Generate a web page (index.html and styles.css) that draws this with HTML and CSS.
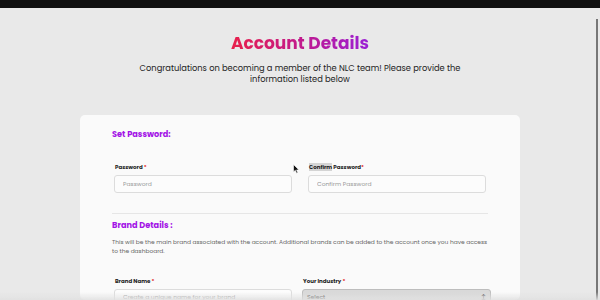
FILE: index.html
```html
<!DOCTYPE html>
<html lang="en">
<head>
<meta charset="utf-8">
<title>Account Details</title>
<link rel="stylesheet" href="styles.css">
</head>
<body>
<div class="topbar"></div>
<main class="page">
  <header class="intro">
    <h1 class="title">Account Details</h1>
    <p class="lead">Congratulations on becoming a member of the NLC team! Please provide the<br>information listed below</p>
  </header>
  <section class="card">
    <h2 class="section-title">Set Password:</h2>
    <div class="row row-pw">
      <div class="field">
        <label class="label">Password <span class="req">*</span></label>
        <input class="input" type="password" placeholder="Password">
      </div>
      <div class="field">
        <label class="label"><span class="sel">Confirm</span> Password<span class="req">*</span></label>
        <input class="input" type="password" placeholder="Confirm Password">
      </div>
    </div>
    <hr class="divider">
    <h2 class="section-title section-brand">Brand Details :</h2>
    <p class="note">This will be the main brand associated with the account. Additional brands can be added to the account once you have access to the dashboard.</p>
    <div class="row row-brand">
      <div class="field">
        <label class="label">Brand Name <span class="req">*</span></label>
        <input class="input" type="text" placeholder="Create a unique name for your brand">
      </div>
      <div class="field field-wide">
        <label class="label">Your Industry <span class="req">*</span></label>
        <div class="select">Select<span class="caret">&#8597;</span></div>
      </div>
    </div>
  </section>
</main>
<svg class="cursor" width="7" height="10" viewBox="0 0 7 10"><path d="M0.5 0.5 L0.5 8 L2.3 6.3 L3.6 9.3 L4.8 8.8 L3.6 5.9 L6 5.9 Z" fill="#111" stroke="#fff" stroke-width="0.6"/></svg>
<div class="scrollbar"></div>
<div class="bottom-fade"></div>
</body>
</html>
```
FILE: styles.css
```css
* { box-sizing: border-box; }
html, body { margin: 0; padding: 0; }
body {
  background: #e9e9e9;
  font-family: "Poppins", "Inter", "Noto Sans", sans-serif;
  color: #222;
  width: 600px;
  height: 300px;
  overflow: hidden;
}
.topbar { height: 8px; background: #111; }
.page { padding-top: 24px; }
.intro { text-align: center; }
.title {
  margin: 0;
  font-size: 17px;
  font-weight: 700;
  line-height: 22px;
  background: linear-gradient(90deg, #e8204a 0%, #c21a8c 50%, #9a1fd6 100%);
  -webkit-background-clip: text;
  background-clip: text;
  color: transparent;
  display: inline-block;
  vertical-align: top;
}
.lead {
  margin: 6px 0 0;
  font-size: 8.3px;
  line-height: 11px;
  color: #222;
}
.card {
  margin: 30px 80px 0;
  background: #fafafa;
  border-radius: 5px;
  padding: 13px 32px 0;
  height: 185px;
  overflow: hidden;
}
.section-title {
  margin: 0;
  font-size: 8.2px;
  font-weight: 700;
  color: #a313e6;
  line-height: 12px;
}
.section-brand { margin-top: 5px; }
.row { display: flex; gap: 16px; padding-left: 2px; }
.row-pw { margin-top: 23px; }
.field { width: 178px; flex-shrink: 0; display: flex; flex-direction: column; }
.field-wide { width: 189px; margin-left: -6px; }
.label {
  font-size: 5.5px;
  font-weight: 700;
  color: #222;
  line-height: 8px;
  margin-left: 1px;
}
.sel { background: #d4d4d4; }
.req { color: #e02020; }
.input {
  margin-top: 4px;
  height: 18px;
  border: 1px solid #dcdcdc;
  border-radius: 3px;
  background: #fcfcfc;
  font-family: inherit;
  font-size: 6px;
  padding: 0 8px;
  color: #333;
  outline: none;
}
.input::placeholder { color: #9a9a9a; }
.divider {
  margin: 19.5px 0 0;
  border: 0;
  height: 1.5px;
  background: #e6e6e6;
}
.note {
  margin: 7px 0 0;
  font-size: 5.9px;
  line-height: 9px;
  color: #666;
}
.row-brand { margin-top: 20.5px; }
.select {
  margin-top: 4px;
  height: 18px;
  border: 1px solid #bdbdbd;
  border-radius: 3px;
  background: #d9d9d9;
  font-size: 6px;
  padding: 0 4px;
  display: flex;
  align-items: center;
  justify-content: space-between;
  color: #333;
}
.caret { font-size: 6px; }
.cursor {
  position: fixed;
  left: 293px;
  top: 164px;
}
.scrollbar {
  position: fixed;
  right: 2px;
  top: 19px;
  width: 2px;
  height: 281px;
  background: #777;
}
.bottom-fade {
  position: fixed;
  left: 0;
  right: 0;
  bottom: 0;
  height: 8px;
  background: linear-gradient(180deg, rgba(233,233,233,0) 0%, rgba(225,225,225,0.9) 100%);
}
```
